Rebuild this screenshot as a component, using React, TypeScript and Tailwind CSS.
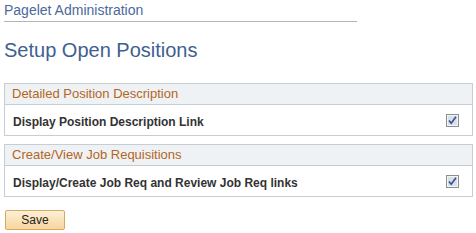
import React from 'react';

const Check = () => (
  <svg width="13" height="13" viewBox="0 0 13 13">
    <rect x="0.5" y="0.5" width="12" height="12" fill="#e4e6ea" stroke="#8a8f96" />
    <rect x="1.5" y="1.5" width="10" height="10" fill="#dcdfe4" stroke="#f4f5f7" />
    <path d="M3 6.5 L5.2 9.2 L10 2.8" fill="none" stroke="#2d4f9c" strokeWidth="1.6" />
  </svg>
);

const Group = ({ title, label }: { title: string; label: string }) => (
  <div className="ml-[4px] mr-[3px] border border-[#c8cdd2]">
    <div className="h-[21px] bg-[#eef2f4] border-b border-[#c8cdd2] px-[7px] flex items-center text-[13px] text-[#b5651d]">
      {title}
    </div>
    <div className="h-[30px] flex items-start pt-[10px] px-[8px] justify-between">
      <span className="text-[12px] leading-[14px] font-bold text-[#333]">{label}</span>
      <span className="mr-[5px] -mt-[1px]"><Check /></span>
    </div>
  </div>
);

export default function App() {
  return (
    <div className="w-[476px] h-[233px] bg-white overflow-hidden" style={{ fontFamily: '"Liberation Sans", Arial, sans-serif' }}>
      <div className="pt-[2px] px-[4px]">
        <div className="w-[353px] border-b border-[#b4b4b4] h-[20px] text-[14px] leading-[16px] text-[#4b6a9a]">
          Pagelet Administration
        </div>
      </div>
      <div className="px-[4px] mt-[16px] text-[20px] leading-[24px] text-[#3e5f90]">Setup Open Positions</div>
      <div className="mt-[21px]">
        <Group title="Detailed Position Description" label="Display Position Description Link" />
      </div>
      <div className="mt-[8px]">
        <Group title="Create/View Job Requisitions" label="Display/Create Job Req and Review Job Req links" />
      </div>
      <div className="px-[5px] mt-[10px]">
        <button className="w-[60px] h-[20px] border border-[#d6a862] rounded-[2px] bg-gradient-to-b from-[#fdf0d6] to-[#f7d59d] text-[12px] text-[#222]">
          Save
        </button>
      </div>
    </div>
  );
}
